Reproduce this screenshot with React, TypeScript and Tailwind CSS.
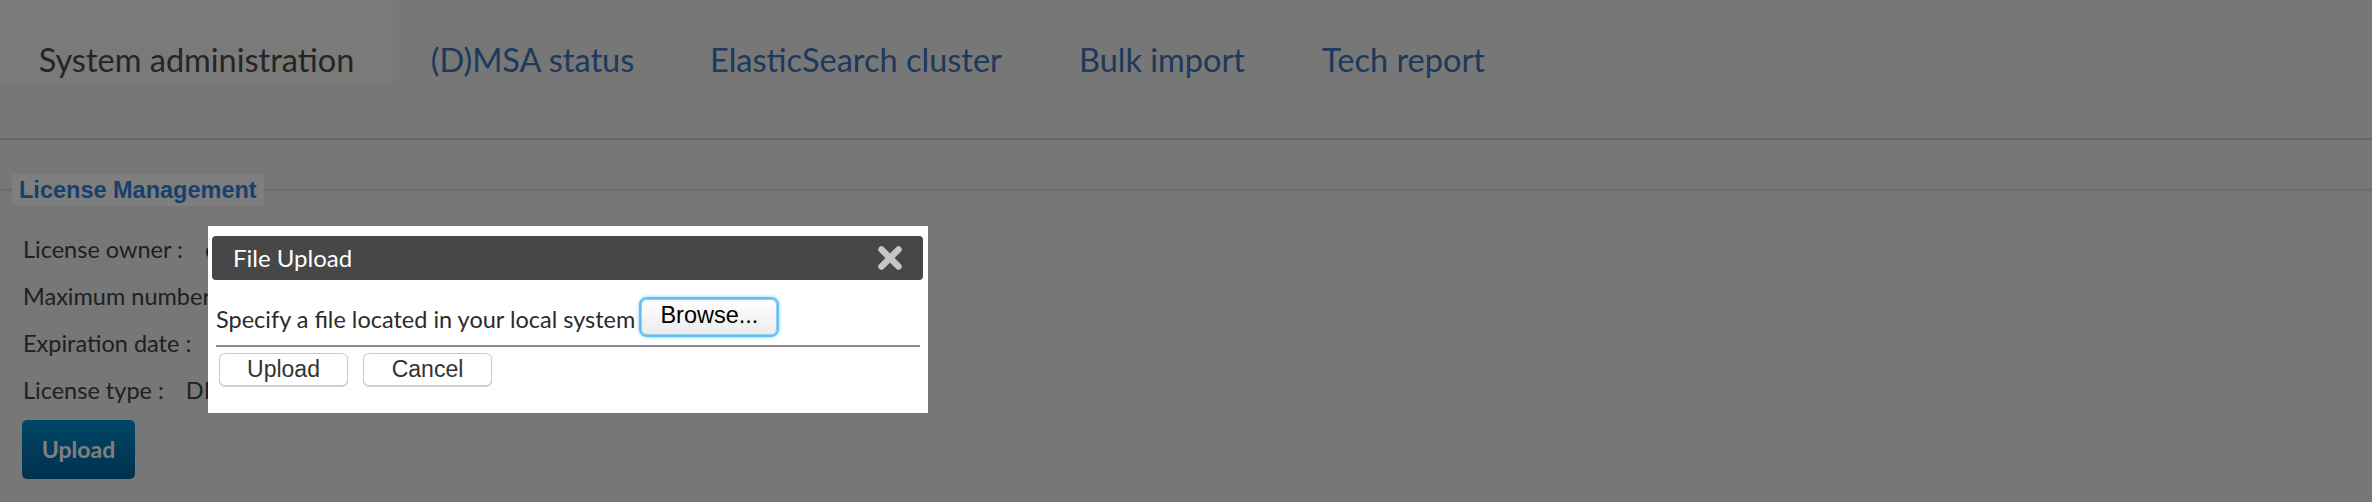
const TABS = [
  { label: 'System administration', width: 'w-[393px]', active: true },
  { label: '(D)MSA status', width: 'w-[279px]' },
  { label: 'ElasticSearch cluster', width: 'w-[368px]' },
  { label: 'Bulk import', width: 'w-[244px]' },
  { label: 'Tech report', width: 'w-[239px]' },
];

const LICENSE_ROWS = [
  { label: 'License owner :', value: 'company' },
  { label: 'Maximum number of users :', value: '250' },
  { label: 'Expiration date :', value: '2018-12-31' },
  { label: 'License type :', value: 'DEMO' },
];

function CloseIcon() {
  return (
    <svg width="26" height="26" viewBox="0 0 26 26" className="blur-[0.4px]">
      <path d="M4.5 4.5 L21.5 21.5 M21.5 4.5 L4.5 21.5" stroke="#c6c6c6" strokeWidth="6.5" strokeLinecap="round" />
    </svg>
  );
}

function FileUploadDialog() {
  return (
    <div className="absolute left-[208px] top-[226px] h-[187px] w-[720px] bg-white pl-[4px] pr-[5px] pt-[10px]">
      <div className="flex h-[44px] items-center justify-between rounded-[4px] bg-[#474747] pl-[21px] pr-[20px]">
        <span className="font-['Lato',sans-serif] text-[24px] leading-none text-white">File Upload</span>
        <CloseIcon />
      </div>
      <div className="ml-[4px] mr-[3px]">
        <div className="mt-[19px] flex items-center">
          <span className="pt-[5px] font-['Lato',sans-serif] text-[23.5px] leading-[1.2] text-[#2b2b2b]">
            Specify a file located in your local system
          </span>
          <button className="ml-[6px] h-[36px] w-[136px] rounded-[6px] border border-[#8fcdee] bg-gradient-to-b from-white to-[#ececec] pb-[3px] font-['Liberation_Sans',Arial,sans-serif] text-[23.5px] leading-none text-black shadow-[0_0_0_2px_#62c0f0,0_0_3px_3px_rgba(98,192,240,0.45)]">
            Browse...
          </button>
        </div>
        <div className="mt-[10px] h-[2px] bg-[#8a8a8a]" />
        <div className="mt-[6px] flex gap-[15px] pl-[3px]">
          {['Upload', 'Cancel'].map((b) => (
            <button
              key={b}
              className="h-[33px] w-[129px] rounded-[6px] border border-[#c9c9c9] bg-white font-['Liberation_Sans',Arial,sans-serif] text-[23px] leading-none text-[#333] shadow-[0_1px_1px_rgba(0,0,0,0.18)]"
            >
              {b}
            </button>
          ))}
        </div>
      </div>
    </div>
  );
}

export default function App() {
  return (
    <div className="relative h-[502px] w-full overflow-hidden bg-[#eeeeee] font-['Lato',sans-serif]">
      <nav className="flex h-[140px] border-b-2 border-[#d0d0d0]">
        {TABS.map((t) => (
          <div
            key={t.label}
            className={`${t.width} h-[82px] shrink-0 pt-[44px] text-center text-[32.5px] leading-[32px] ${
              t.active ? 'bg-[#f4f4f4] text-[#4a4a4a]' : 'text-[#3a72b6]'
            }`}
          >
            {t.label}
          </div>
        ))}
      </nav>

      <fieldset className="mt-[34px] border-t-2 border-[#d8d8d8]">
        <legend className="ml-[12px] h-[32px] bg-[#fcfcfc] px-[7px] font-['Liberation_Sans',Arial,sans-serif] text-[23.5px] font-bold leading-[32px] text-[#2f82d4]">
          License Management
        </legend>
        <div className="pl-[23px] pt-[20px]">
          {LICENSE_ROWS.map((r) => (
            <div key={r.label} className="flex h-[47px] gap-[22px] text-[23.5px] leading-[47px] text-[#404040]">
              <span>{r.label}</span>
              <span>{r.value}</span>
            </div>
          ))}
          <button className="ml-[-1px] mt-[6px] h-[59px] w-[113px] rounded-[5px] bg-gradient-to-b from-[#008ecf] to-[#00629a] text-[23px] font-bold text-white">
            Upload
          </button>
        </div>
      </fieldset>

      <div className="absolute inset-0 bg-black/50" />
      <FileUploadDialog />
    </div>
  );
}
